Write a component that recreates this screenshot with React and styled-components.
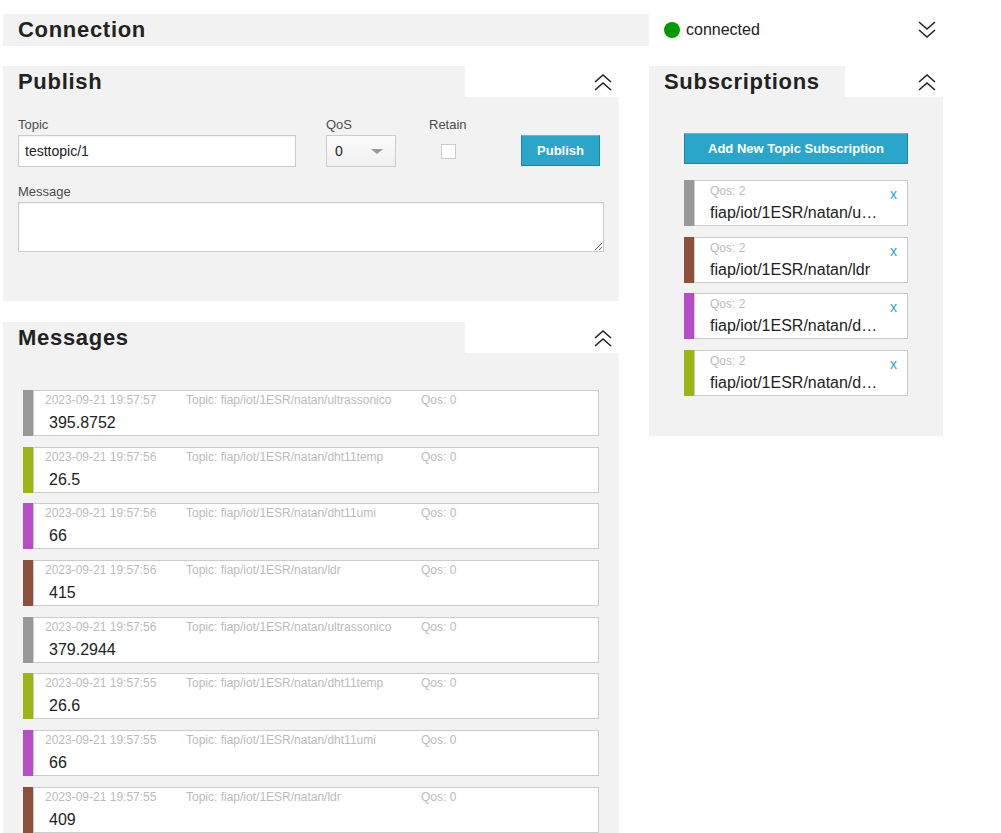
import React from 'react';
import styled, { createGlobalStyle } from 'styled-components';

const GlobalStyle = createGlobalStyle`
  html, body {
    margin: 0;
    padding: 0;
    background: #fff;
  }
  body {
    font-family: 'Liberation Sans', Arial, sans-serif;
    color: #222;
  }
  * {
    box-sizing: border-box;
  }
`;

const COLORS = {
  grey: '#999999',
  olive: '#9cb514',
  purple: '#b84cc8',
  brown: '#8d513b',
};

const subscriptions = [
  { topic: 'fiap/iot/1ESR/natan/ultrassonico', qos: 2, color: COLORS.grey },
  { topic: 'fiap/iot/1ESR/natan/ldr', qos: 2, color: COLORS.brown },
  { topic: 'fiap/iot/1ESR/natan/dht11umi', qos: 2, color: COLORS.purple },
  { topic: 'fiap/iot/1ESR/natan/dht11temp', qos: 2, color: COLORS.olive },
];

const messages = [
  { date: '2023-09-21 19:57:57', topic: 'fiap/iot/1ESR/natan/ultrassonico', value: '395.8752', color: COLORS.grey },
  { date: '2023-09-21 19:57:56', topic: 'fiap/iot/1ESR/natan/dht11temp', value: '26.5', color: COLORS.olive },
  { date: '2023-09-21 19:57:56', topic: 'fiap/iot/1ESR/natan/dht11umi', value: '66', color: COLORS.purple },
  { date: '2023-09-21 19:57:56', topic: 'fiap/iot/1ESR/natan/ldr', value: '415', color: COLORS.brown },
  { date: '2023-09-21 19:57:56', topic: 'fiap/iot/1ESR/natan/ultrassonico', value: '379.2944', color: COLORS.grey },
  { date: '2023-09-21 19:57:55', topic: 'fiap/iot/1ESR/natan/dht11temp', value: '26.6', color: COLORS.olive },
  { date: '2023-09-21 19:57:55', topic: 'fiap/iot/1ESR/natan/dht11umi', value: '66', color: COLORS.purple },
  { date: '2023-09-21 19:57:55', topic: 'fiap/iot/1ESR/natan/ldr', value: '409', color: COLORS.brown },
];

const Page = styled.div`
  padding: 14px 3px 0 3px;
`;

const TopRow = styled.div`
  display: flex;
  height: 32px;
`;

const Title = styled.h2`
  margin: 0;
  font-size: 22px;
  font-weight: 700;
  letter-spacing: 0.7px;
  line-height: 32px;
  color: #222;
`;

const ConnectionBar = styled.div`
  width: 646px;
  background: #f2f2f2;
  padding-left: 15px;
`;

const StatusBox = styled.div`
  width: 294px;
  display: flex;
  align-items: center;
  justify-content: space-between;
  padding: 0 7px 0 15px;
`;

const Status = styled.div`
  display: flex;
  align-items: center;
  gap: 6px;
  font-size: 16px;
  color: #222;
`;

const Dot = styled.span`
  width: 16px;
  height: 16px;
  border-radius: 50%;
  background: #009a00;
`;

const Main = styled.div`
  display: flex;
  gap: 30px;
  margin-top: 20px;
  align-items: flex-start;
`;

const Column = styled.div`
  width: ${p => p.$width}px;
  display: flex;
  flex-direction: column;
  gap: 21px;
`;

const PanelHead = styled.div`
  display: flex;
  height: 31px;
`;

const Tab = styled.div`
  width: ${p => p.$width}px;
  background: #f2f2f2;
  padding-left: 15px;
  ${Title} {
    line-height: 31px;
  }
`;

const HeadRest = styled.div`
  flex: 1;
  display: flex;
  align-items: center;
  justify-content: flex-end;
  padding-right: 7px;
`;

const PanelBody = styled.div`
  background: #f2f2f2;
  padding: ${p => p.$padding};
`;

const Row = styled.div`
  display: flex;
  align-items: flex-start;
`;

const Field = styled.div`
  width: ${p => p.$width ? `${p.$width}px` : 'auto'};
  margin-right: ${p => p.$gap || 0}px;
  margin-top: ${p => p.$top || 0}px;
  display: flex;
  flex-direction: column;
`;

const Label = styled.label`
  font-size: 13px;
  line-height: 17px;
  color: #4d4d4d;
  margin-bottom: 2px;
`;

const TextInput = styled.input`
  height: 32px;
  width: 100%;
  border: 1px solid #ccc;
  background: #fff;
  font-family: inherit;
  font-size: 14px;
  color: #222;
  padding: 0 6px;
  outline: none;
  box-shadow: inset 0 1px 2px rgba(0, 0, 0, 0.06);
`;

const SelectWrap = styled.div`
  position: relative;
  width: 70px;
  height: 32px;
`;

const Select = styled.select`
  appearance: none;
  width: 100%;
  height: 100%;
  border: 1px solid #ccc;
  background: linear-gradient(#fbfbfb, #f0f0f0);
  font-family: inherit;
  font-size: 14px;
  color: #222;
  padding: 0 8px;
  outline: none;
`;

const Caret = styled.span`
  position: absolute;
  right: 13px;
  top: 14px;
  width: 0;
  height: 0;
  border-left: 6px solid transparent;
  border-right: 6px solid transparent;
  border-top: 5px solid #999;
  pointer-events: none;
`;

const Check = styled.input`
  appearance: none;
  width: 15px;
  height: 15px;
  margin: 9px 0 0 12px;
  border: 1px solid #ccc;
  background: #fff;
`;

const Button = styled.button`
  height: ${p => p.$height}px;
  width: ${p => p.$width}px;
  background: #2ba6cb;
  border: 1px solid #1e86a5;
  border-top-color: #5cbbd8;
  color: #fff;
  font-family: inherit;
  font-size: 13px;
  font-weight: 700;
  padding: 0;
  cursor: pointer;
`;

const TextArea = styled.textarea`
  display: block;
  width: 100%;
  height: 50px;
  border: 1px solid #ccc;
  background: #fff;
  font-family: inherit;
  font-size: 14px;
  margin: 0;
  outline: none;
  box-shadow: inset 0 1px 2px rgba(0, 0, 0, 0.06);
`;

const List = styled.div`
  display: flex;
  flex-direction: column;
  gap: ${p => p.$gap}px;
  margin-top: ${p => p.$top || 0}px;
`;

const Item = styled.div`
  display: flex;
  height: 46px;
`;

const ColorBar = styled.div`
  width: 10px;
  background: ${p => p.$color};
`;

const ItemBody = styled.div`
  flex: 1;
  min-width: 0;
  position: relative;
  background: #fff;
  border: 1px solid #ccc;
  padding: ${p => p.$padding};
`;

const Meta = styled.div`
  display: flex;
  font-size: 12px;
  line-height: 16px;
  color: #bbb;
  white-space: nowrap;
`;

const MetaCell = styled.span`
  width: ${p => p.$width ? `${p.$width}px` : 'auto'};
`;

const Value = styled.div`
  font-size: 16px;
  line-height: 20px;
  padding-left: 4px;
  margin-top: 5px;
  color: #222;
`;

const SubQos = styled.div`
  font-size: 12px;
  line-height: 16px;
  color: #bbb;
`;

const SubTopic = styled.div`
  width: 169px;
  font-size: 16px;
  line-height: 20px;
  margin-top: 4px;
  color: #222;
  white-space: nowrap;
  overflow: hidden;
  text-overflow: ellipsis;
`;

const Close = styled.span`
  position: absolute;
  top: 5px;
  right: 10px;
  font-size: 14px;
  color: #2ba6cb;
  cursor: pointer;
`;

const Chevrons = ({ down }) => (
  <svg width="18" height="18" viewBox="0 0 18 18" fill="none" stroke="#222" strokeWidth="1.6">
    {down ? (
      <>
        <polyline points="1,1 9,8 17,1" />
        <polyline points="1,9 9,16 17,9" />
      </>
    ) : (
      <>
        <polyline points="1,9 9,2 17,9" />
        <polyline points="1,17 9,10 17,17" />
      </>
    )}
  </svg>
);

const Panel = ({ title, tabWidth, padding, children }) => (
  <section>
    <PanelHead>
      <Tab $width={tabWidth}><Title>{title}</Title></Tab>
      <HeadRest><Chevrons /></HeadRest>
    </PanelHead>
    <PanelBody $padding={padding}>{children}</PanelBody>
  </section>
);

const App = () => (
  <Page>
    <GlobalStyle />
    <TopRow>
      <ConnectionBar><Title>Connection</Title></ConnectionBar>
      <StatusBox>
        <Status><Dot />connected</Status>
        <Chevrons down />
      </StatusBox>
    </TopRow>

    <Main>
      <Column $width={616}>
        <Panel title="Publish" tabWidth={462} padding="19px 15px 49px 15px">
          <Row>
            <Field $width={278} $gap={30}>
              <Label>Topic</Label>
              <TextInput defaultValue="testtopic/1" />
            </Field>
            <Field $width={70} $gap={33}>
              <Label>QoS</Label>
              <SelectWrap>
                <Select defaultValue="0">
                  <option value="0">0</option>
                  <option value="1">1</option>
                  <option value="2">2</option>
                </Select>
                <Caret />
              </SelectWrap>
            </Field>
            <Field $width={92}>
              <Label>Retain</Label>
              <Check type="checkbox" />
            </Field>
            <Field>
              <Label>&nbsp;</Label>
              <Button $width={79} $height={31}>Publish</Button>
            </Field>
          </Row>
          <Field $top={16}>
            <Label>Message</Label>
            <TextArea />
          </Field>
        </Panel>

        <Panel title="Messages" tabWidth={462} padding="37px 20px 20px 20px">
          <List $gap={10.7}>
            {messages.map((m, i) => (
              <Item key={i}>
                <ColorBar $color={m.color} />
                <ItemBody $padding="1px 11px">
                  <Meta>
                    <MetaCell $width={141}>{m.date}</MetaCell>
                    <MetaCell $width={235}>Topic: {m.topic}</MetaCell>
                    <MetaCell>Qos: 0</MetaCell>
                  </Meta>
                  <Value>{m.value}</Value>
                </ItemBody>
              </Item>
            ))}
          </List>
        </Panel>
      </Column>

      <Column $width={294}>
        <Panel title="Subscriptions" tabWidth={196} padding="36px 35px 40px 35px">
          <Button $width={224} $height={31}>Add New Topic Subscription</Button>
          <List $gap={10.7} $top={16}>
            {subscriptions.map((s, i) => (
              <Item key={i}>
                <ColorBar $color={s.color} />
                <ItemBody $padding="2px 15px">
                  <SubQos>Qos: {s.qos}</SubQos>
                  <SubTopic>{s.topic}</SubTopic>
                  <Close>x</Close>
                </ItemBody>
              </Item>
            ))}
          </List>
        </Panel>
      </Column>
    </Main>
  </Page>
);

export default App;
